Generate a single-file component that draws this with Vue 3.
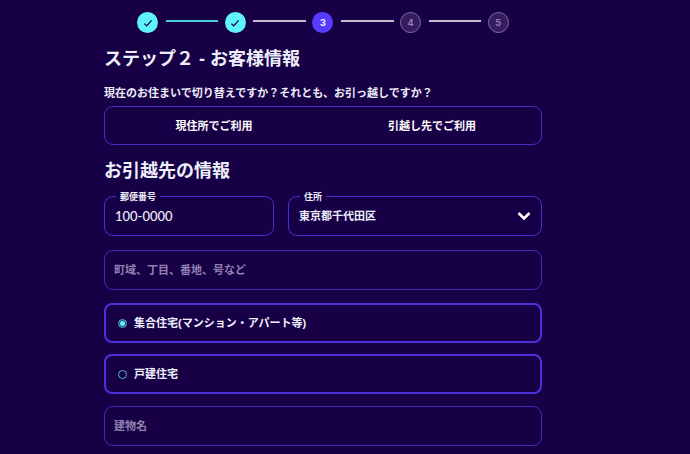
<script setup>
import { ref } from 'vue'

const steps = [
  { n: 1, state: 'done' },
  { n: 2, state: 'done' },
  { n: 3, state: 'current' },
  { n: 4, state: 'todo' },
  { n: 5, state: 'todo' },
]
const postal = ref('100-0000')
const city = ref('東京都千代田区')
const town = ref('')
const building = ref('')
const housing = ref('apartment')
const place = ref('')
</script>

<template>
  <main class="page">
    <ol class="steps">
      <li v-for="s in steps" :key="s.n" class="step" :class="s.state">
        <span class="dot">
          <svg v-if="s.state === 'done'" viewBox="0 0 12 12" width="12" height="12" aria-label="完了">
            <path d="M2.4 6.6 4.7 8.9 9.6 3.4" fill="none" stroke="#170642" stroke-width="1.3" />
          </svg>
          <template v-else>{{ s.n }}</template>
        </span>
      </li>
    </ol>

    <h1 class="title">ステップ２ - お客様情報</h1>
    <p id="place-question" class="question">現在のお住まいで切り替えですか？それとも、お引っ越しですか？</p>
    <div class="choice" role="group" aria-labelledby="place-question">
      <button type="button" @click="place = 'current'">現住所でご利用</button>
      <button type="button" @click="place = 'moving'">引越し先でご利用</button>
    </div>

    <h2 class="title second">お引越先の情報</h2>
    <div class="pair">
      <div class="field labelled">
        <label for="postal">郵便番号</label>
        <input id="postal" v-model="postal" class="digits" type="text" />
      </div>
      <div class="field labelled">
        <label for="city">住所</label>
        <select id="city" v-model="city">
          <option>東京都千代田区</option>
        </select>
        <svg class="chevron" viewBox="0 0 14 10" width="14" height="10" aria-hidden="true">
          <path d="M1.5 2 7 7.5 12.5 2" fill="none" stroke="#fff" stroke-width="2.6" />
        </svg>
      </div>
    </div>

    <div class="field plain">
      <input v-model="town" type="text" aria-label="町域、丁目、番地、号など" placeholder="町域、丁目、番地、号など" />
    </div>
    <label class="radio">
      <input v-model="housing" type="radio" name="housing" value="apartment" />
      <span>集合住宅(マンション・アパート等)</span>
    </label>
    <label class="radio">
      <input v-model="housing" type="radio" name="housing" value="house" />
      <span>戸建住宅</span>
    </label>
    <div class="field plain">
      <input v-model="building" type="text" aria-label="建物名" placeholder="建物名" />
    </div>
  </main>
</template>

<style>
body {
  background: #180046;
}
</style>

<style scoped>
.page,
.page * {
  box-sizing: border-box;
}
.page {
  padding: 12px 148px 8px 104px;
  color: #eceffa;
  font-family: "Liberation Sans", "Noto Sans CJK JP", sans-serif;
  font-size: 11px;
  font-weight: 700;
  line-height: 16px;
}
.steps {
  display: grid;
  grid-template-columns: repeat(5, 1fr);
  margin: 0;
  padding: 0;
  list-style: none;
}
.step {
  position: relative;
  display: flex;
  justify-content: center;
}
.step:not(:last-child)::after {
  content: "";
  position: absolute;
  top: 8px;
  left: calc(50% + 18px);
  width: calc(100% - 35px);
  height: 2px;
  background: #c3bdcd;
}
.step:first-child::after {
  background: #4fcbdc;
}
.dot {
  display: flex;
  align-items: center;
  justify-content: center;
  width: 21px;
  height: 21px;
  border-radius: 50%;
  font-family: Inter, "Liberation Sans", sans-serif;
  font-size: 9px;
  line-height: 12px;
}
.done .dot {
  background: #5ff3fb;
}
.current .dot {
  background: #563cff;
}
.todo .dot {
  border: 1px solid #7d6c9f;
  background: #361d62;
  color: #8f80ad;
}
.title {
  margin: 13px 0 0;
  font-size: 18px;
  line-height: 26px;
}
.question {
  margin: 13px 0 5px;
}
.choice {
  display: grid;
  grid-template-columns: 1fr 1fr;
  height: 39px;
  border: 1px solid #462cc5;
  border-radius: 9px;
}
.choice button {
  padding: 0;
  border: 0;
  background: none;
  color: #fff;
  font: inherit;
}
.second {
  margin-top: 13px;
}
.pair {
  display: grid;
  grid-template-columns: 170fr 254fr;
  gap: 14px;
  margin: 12px 0 14px;
}
.field {
  position: relative;
  height: 40px;
  border: 1px solid #4a2fd0;
  border-radius: 9px;
}
.field label {
  position: absolute;
  top: -6px;
  left: 11px;
  padding: 0 4px;
  background: #180046;
  font-size: 9px;
  line-height: 12px;
}
.field input,
.field select {
  display: block;
  width: 100%;
  height: 100%;
  padding: 0 10px;
  border: 0;
  outline: 0;
  background: none;
  color: #eceffa;
  font: inherit;
  appearance: none;
}
.field .digits {
  font-family: Lato, "Liberation Sans", sans-serif;
  font-size: 13px;
  font-weight: 500;
}
.chevron {
  position: absolute;
  top: 14px;
  right: 10px;
  pointer-events: none;
}
.plain {
  border-color: #432abf;
}
.plain input {
  padding: 0 9px;
}
.plain input::placeholder {
  color: #8f80b0;
  opacity: 1;
}
.radio {
  display: flex;
  align-items: center;
  gap: 7px;
  height: 40px;
  margin: 13px 0 11px;
  padding: 0 12px;
  border: 2px solid #4b31dc;
  border-radius: 8px;
}
.radio + .radio {
  margin: 0 0 12px;
}
.radio input {
  width: 9px;
  height: 9px;
  margin: 0;
  border: 1px solid #4ab9c4;
  border-radius: 50%;
  appearance: none;
}
.radio input:checked {
  background: radial-gradient(circle, #5ff3fb 2px, #2b3c78 3px);
}
</style>
